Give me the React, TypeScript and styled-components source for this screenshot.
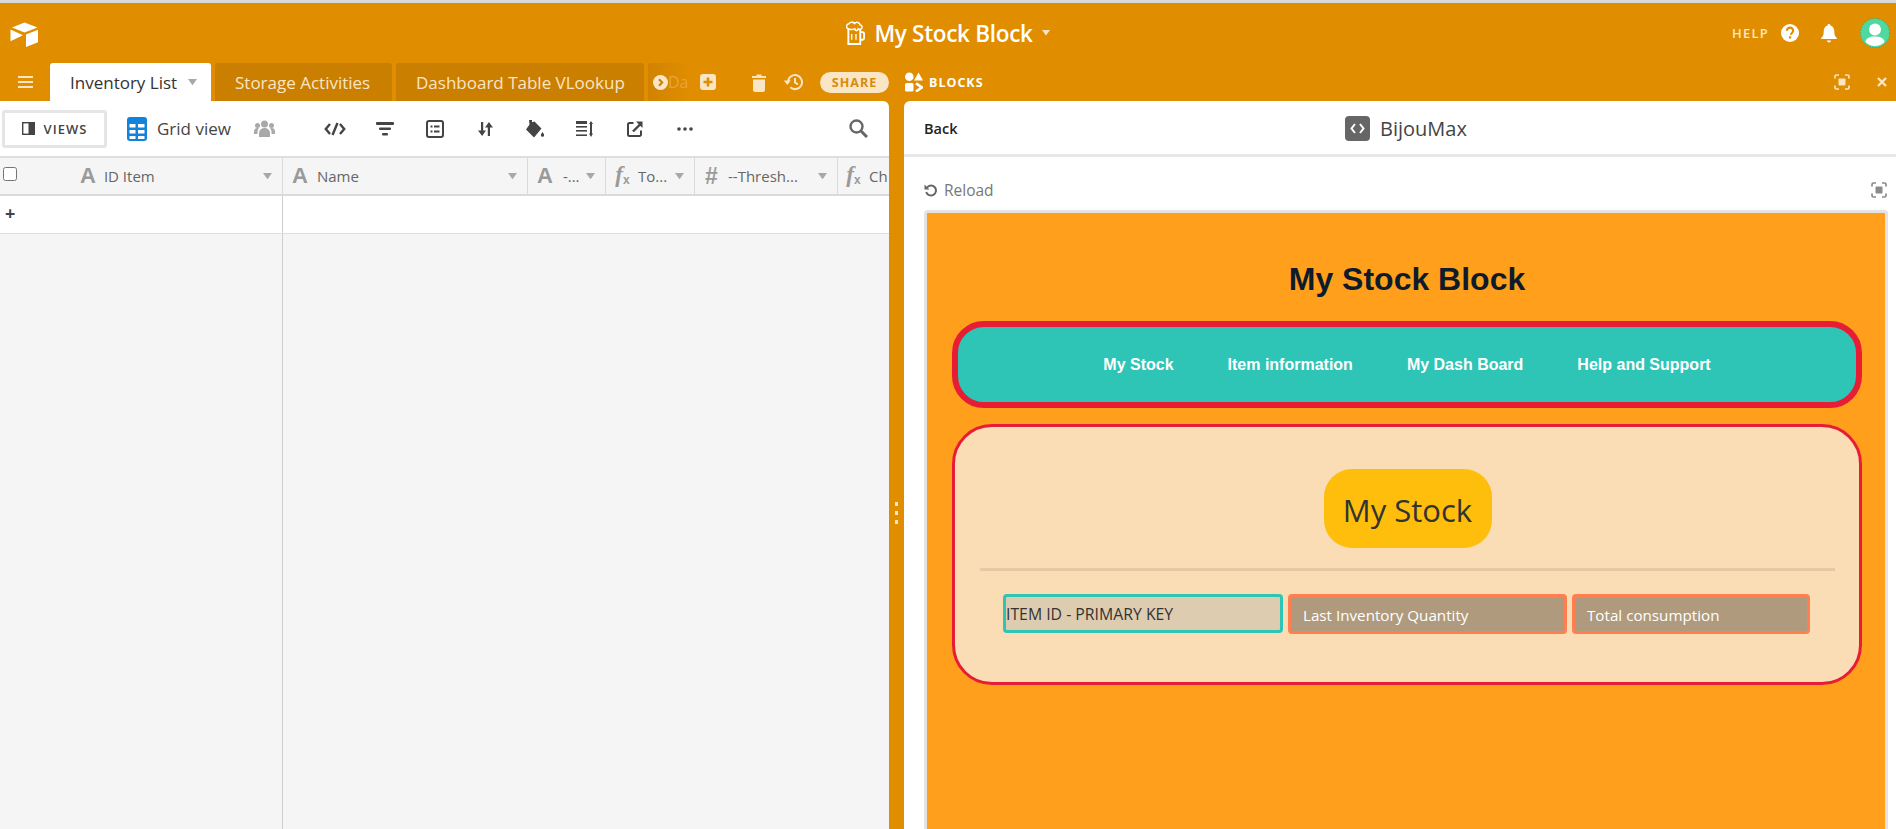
import React from "react";
import styled, { createGlobalStyle } from "styled-components";

const GlobalStyle = createGlobalStyle`
  html, body {
    margin: 0;
    padding: 0;
    height: 100%;
    overflow: hidden;
    background: #e08d00;
  }
  * {
    box-sizing: border-box;
  }
  svg {
    flex: none;
  }
`;

const SEGOE = `"Open Sans", "Noto Sans", sans-serif`;
const ARIAL = `"Liberation Sans", Arial, sans-serif`;
const SERIF = `"Liberation Serif", serif`;

const columns = [
  { width: 283, icon: "A", label: "ID Item", indent: 80, check: true, textGap: 8 },
  { width: 245, icon: "A", label: "Name", indent: 9, textGap: 9 },
  { width: 78, icon: "A", label: "-...", indent: 9, textGap: 10 },
  { width: 89, icon: "fx", label: "To...", indent: 9, textGap: 8 },
  { width: 143, icon: "#", label: "--Thresh...", indent: 9, textGap: 9 },
  { width: 60, icon: "fx", label: "Ch", indent: 8, textGap: 8 },
];

const Caret = ({ color = "#a8a8a8", size = 9 }: { color?: string; size?: number }) => (
  <svg width={size} height={size * 0.7} viewBox="0 0 10 7">
    <path d="M0 0h10L5 7z" fill={color} />
  </svg>
);

const LogoIcon = () => (
  <svg width="29" height="25" viewBox="0 0 29 25">
    <path d="M14.5 0.5 L2 5.4 L14.5 10.4 L27.5 5.4 Z" fill="#fff" />
    <path d="M16 12.6 V25 L28 20.2 V7.8 Z" fill="#fff" />
    <path d="M0.5 7.5 V19.2 L13 13.2 Z" fill="#fff" />
  </svg>
);

const BeerIcon = () => (
  <svg width="19" height="25" viewBox="0 0 20 25" fill="none" stroke="#fff" strokeWidth="2">
    <path d="M2.5 8v15.5h12.5V8" />
    <path d="M15 11h2.5a1.5 1.5 0 0 1 1.5 1.5v5a1.5 1.5 0 0 1-1.5 1.5H15" />
    <path d="M2 7.5a2.8 2.8 0 0 1 1-5.2A3.6 3.6 0 0 1 9 2a3.4 3.4 0 0 1 6 1.6 2.3 2.3 0 0 1 .5 4.4c-1.4.6-2 0-2.6-.4-.5 2.6-3.4 2.4-3.6 0-1.6.6-5.6 1-7.3-.1z" strokeWidth="1.6" />
    <path d="M6 13v6M10.500 13v6" strokeWidth="1.4" />
  </svg>
);

const QuestionIcon = () => (
  <svg width="18" height="18" viewBox="0 0 18 18">
    <circle cx="9" cy="9" r="9" fill="#fff" />
    <path d="M5.900 6.800a3.100 3.100 0 0 1 6.200 0c0 2.200-2.200 2.100-2.200 3.900" fill="none" stroke="#e08d00" strokeWidth="2.200" />
    <rect x="8" y="12.300" width="2.200" height="2.200" fill="#e08d00" />
  </svg>
);

const BellIcon = () => (
  <svg width="16" height="19" viewBox="0 0 16 19">
    <path d="M8 0a1.400 1.400 0 0 1 1.400 1.500C12 2.200 13.300 4.500 13.300 7.500c0 3.500.7 5 2.500 6.500v1H.2v-1c1.800-1.500 2.500-3 2.500-6.500 0-3 1.300-5.300 3.900-6A1.400 1.400 0 0 1 8 0z" fill="#fff" />
    <path d="M6 16.500h4a2 2 0 0 1-4 0z" fill="#fff" />
  </svg>
);

const AvatarIcon = () => (
  <svg width="30" height="30" viewBox="0 0 30 30">
    <circle cx="15" cy="15" r="14.600" fill="#4fd8a0" stroke="#1f9d7a" strokeWidth="0.600" strokeDasharray="1.500 1.500" />
    <circle cx="15" cy="11.500" r="6" fill="#fff" />
    <path d="M5.500 24c0-3.500 4-5.500 9.500-5.500s9.500 2 9.500 5.500c-2.500 2.800-5.600 4-9.500 4s-7-1.200-9.500-4z" fill="#fff" />
  </svg>
);

const FocusIcon = ({ color }: { color: string }) => (
  <svg width="16" height="16" viewBox="0 0 16 16" fill="none" stroke={color} strokeWidth="1.700">
    <path d="M1 4.500V2.500A1.500 1.500 0 0 1 2.500 1H5M11 1h2.500A1.500 1.500 0 0 1 15 2.500v2M15 11.500v2a1.500 1.500 0 0 1-1.500 1.500H11M5 15H2.500A1.500 1.500 0 0 1 1 13.500v-2" />
    <rect x="4.500" y="4.500" width="7" height="7" rx="1" fill={color} stroke="none" />
  </svg>
);

const ChevronCircle = () => (
  <svg width="15" height="15" viewBox="0 0 15 15">
    <circle cx="7.500" cy="7.500" r="7.500" fill="#fae5c5" />
    <path d="M6 4.200 9.200 7.500 6 10.800" fill="none" stroke="#c97f00" strokeWidth="2" />
  </svg>
);

const PlusBoxIcon = () => (
  <svg width="16" height="16" viewBox="0 0 16 16">
    <rect width="16" height="16" rx="3" fill="#fae5c5" />
    <path d="M8 3.500v9M3.500 8h9" stroke="#e08d00" strokeWidth="2.600" />
  </svg>
);

const TrashIcon = () => (
  <svg width="14" height="19" viewBox="0 0 14 19">
    <path d="M4.500 1.500h5V3H14v2H0V3h4.500z" fill="#fae5c5" />
    <path d="M1 6.500h12V17a2 2 0 0 1-2 2H3a2 2 0 0 1-2-2z" fill="#fae5c5" />
  </svg>
);

const HistoryIcon = () => (
  <svg width="20" height="18" viewBox="0 0 20 18" fill="none" stroke="#fae5c5" strokeWidth="2">
    <path d="M5 9a7 7 0 1 1 2.300 5.300" />
    <path d="M0.800 7.600h7L4.300 12z" fill="#fae5c5" stroke="none" />
    <path d="M12 5v4.500l3 1.800" />
  </svg>
);

const BlocksIcon = () => (
  <svg width="18" height="20" viewBox="0 0 18 20" fill="#fff">
    <circle cx="4.300" cy="4.700" r="4.300" />
    <path d="M13.500 0.500 18 8.500H9z" />
    <rect x="0" y="11" width="8.500" height="8.500" rx="1.500" />
    <path d="M11 11.300 17 15.300 11 19.500" fill="none" stroke="#fff" strokeWidth="2.600" />
  </svg>
);

const ToolbarIcons = [
  <svg key="hide" width="22" height="14" viewBox="0 0 22 14" fill="none" stroke="#444" strokeWidth="2.400">
    <path d="M6 2 1.800 7 6 12M16 2l4.200 5L16 12M13.500 1 8.500 13" />
  </svg>,
  <svg key="filter" width="18" height="14" viewBox="0 0 18 14" fill="#444">
    <rect x="0" y="0" width="18" height="3" rx="1" />
    <rect x="3" y="5.500" width="12" height="2.500" rx="1" />
    <rect x="6" y="11" width="6" height="2.500" rx="1" />
  </svg>,
  <svg key="group" width="18" height="18" viewBox="0 0 18 18">
    <rect x="1" y="1" width="16" height="16" rx="2" fill="none" stroke="#444" strokeWidth="2" />
    <path d="M4.500 5.500h2v2h-2zM8 5.500h5.500v2H8zM4.500 10.500h2v2h-2zM8 10.500h5.500v2H8z" fill="#444" />
  </svg>,
  <svg key="sort" width="15" height="14" viewBox="0 0 15 14" fill="#444">
    <path d="M3 0h2.200v8.500H8L4.100 14 0 8.500h3z" />
    <path d="M9.800 14h2.200V5.500h3L10.900 0 7 5.500h2.800z" />
  </svg>,
  <svg key="color" width="19" height="18" viewBox="0 0 19 18" fill="#444">
    <path d="M3 0h3v2.200L8.500 1.500 15.500 8.500 8 17.500 0 9.500 3.500 4.500z" />
    <path d="M16.500 12c1 1.500 1.600 2.300 1.600 3.200a1.600 1.600 0 0 1-3.200 0c0-.9.600-1.700 1.600-3.200z" />
  </svg>,
  <svg key="height" width="18" height="16" viewBox="0 0 18 16" fill="#444">
    <rect x="0" y="0" width="11" height="3" />
    <rect x="0" y="5" width="11" height="1.600" />
    <rect x="0" y="9" width="11" height="1.600" />
    <rect x="0" y="13.400" width="11" height="1.600" />
    <path d="M13 3 15 0l2 3h-1v9.500h1L15 16l-2-3.500h1V3z" />
  </svg>,
  <svg key="share" width="16" height="16" viewBox="0 0 16 16" fill="none" stroke="#444" strokeWidth="2">
    <path d="M6.500 2H2.500A1.500 1.500 0 0 0 1 3.500v10A1.500 1.500 0 0 0 2.500 15h10a1.500 1.500 0 0 0 1.500-1.500V9.500" />
    <path d="M6 10.500 14 2.500" strokeWidth="2.400" />
    <path d="M9 0.500h6.500V7z" fill="#444" stroke="none" />
  </svg>,
  <svg key="more" width="16" height="4" viewBox="0 0 16 4" fill="#444">
    <circle cx="2" cy="2" r="1.800" />
    <circle cx="8" cy="2" r="1.800" />
    <circle cx="14" cy="2" r="1.800" />
  </svg>,
];

const SearchIcon = () => (
  <svg width="19" height="19" viewBox="0 0 19 19" fill="none" stroke="#666" strokeWidth="2.400">
    <circle cx="7.500" cy="7.500" r="6" />
    <path d="M12 12l6 6" strokeWidth="3" />
  </svg>
);

const GridIcon = () => (
  <svg width="20" height="24" viewBox="0 0 20 24">
    <rect width="20" height="24" rx="3" fill="#1283da" />
    <path d="M2.500 7h6v3.500h-6zM11 7h6.500v3.500H11zM2.500 13h6v3.500h-6zM11 13h6.500v3.500H11zM2.500 19h6v3h-6zM11 19h6.500v3H11z" fill="#fff" />
  </svg>
);

const PeopleIcon = () => (
  <svg width="21" height="17" viewBox="0 0 21 17" fill="#a9a9a9">
    <circle cx="10.500" cy="4" r="3.500" />
    <circle cx="3.500" cy="5.500" r="2.500" />
    <circle cx="17.500" cy="5.500" r="2.500" />
    <path d="M5 17v-4a5.500 5 0 0 1 11 0v4z" />
    <path d="M0 14v-2.500A3.500 3.500 0 0 1 3.500 8c.5 0 .9.100 1.300.3A7 7 0 0 0 3.500 13v1zM21 14v-2.500A3.500 3.500 0 0 0 17.500 8c-.5 0-.9.100-1.300.3a7 7 0 0 1 1.300 4.700v1z" />
  </svg>
);

const ViewsIcon = () => (
  <svg width="13" height="13" viewBox="0 0 13 13">
    <rect x="0.700" y="0.700" width="11.600" height="11.600" fill="none" stroke="#444" strokeWidth="1.400" />
    <rect x="6.500" y="0.700" width="5.800" height="11.600" fill="#444" />
  </svg>
);

const Page = styled.div`
  width: 1896px;
  height: 829px;
  display: flex;
  flex-direction: column;
  overflow: hidden;
  border-top: 3px solid #d9d9d9;
  font-family: ${SEGOE};
  background: #e08d00;
`;

const TopBar = styled.header`
  height: 60px;
  display: grid;
  grid-template-columns: 1fr auto 1fr;
  align-items: center;
  padding: 0 6px 0 10px;
`;

const LogoSlot = styled.div`
  display: flex;
  align-items: center;
  padding-top: 2px;
`;

const Title = styled.div`
  display: flex;
  align-items: center;
  gap: 9px;
  padding-right: 4px;
  color: #fff;
  font-size: 22.500px;
  font-weight: 600;
  letter-spacing: -0.3px;
`;

const UserArea = styled.div`
  display: flex;
  align-items: center;
  justify-content: flex-end;
`;

const HelpLabel = styled.span`
  color: #fae5c5;
  font-size: 13px;
  font-weight: 600;
  letter-spacing: 1.200px;
  margin-right: 12px;
`;

const BellSlot = styled.span`
  display: flex;
  margin: 0 23px 0 22px;
`;

const TabRow = styled.div`
  height: 38px;
  display: flex;
`;

const LeftTabs = styled.div`
  width: 889px;
  flex: none;
  display: flex;
  align-items: stretch;
`;

const MenuButton = styled.div`
  width: 50px;
  flex: none;
  display: flex;
  flex-direction: column;
  justify-content: center;
  gap: 3px;
  padding-left: 18px;
  span {
    display: block;
    width: 15px;
    height: 2px;
    background: #fae5c5;
  }
`;

const Tab = styled.div<{ $active?: boolean; $width: number }>`
  width: ${(p) => p.$width}px;
  flex: none;
  display: flex;
  align-items: center;
  padding-left: 20px;
  margin-right: 4px;
  font-size: 17px;
  font-weight: ${(p) => (p.$active ? 500 : 400)};
  white-space: nowrap;
  border-radius: 3px 3px 0 0;
  background: ${(p) => (p.$active ? "#fff" : "#ca7f00")};
  color: ${(p) => (p.$active ? "#333" : "#fae5c5")};
  gap: 11px;
`;

const FadeTab = styled.div`
  width: 42px;
  flex: none;
  display: flex;
  align-items: center;
  padding-left: 5px;
  margin-right: 10px;
  border-radius: 3px 3px 0 0;
  background: linear-gradient(90deg, #d18300, #e08d00);
  font-size: 16px;
  color: #e8a43a;
`;

const TabAction = styled.div<{ $after: number }>`
  display: flex;
  flex: none;
  align-items: center;
  margin-right: ${(p) => p.$after}px;
`;

const SharePill = styled.div`
  width: 69px;
  height: 21px;
  flex: none;
  margin-top: 9px;
  display: flex;
  align-items: center;
  justify-content: center;
  border-radius: 11px;
  background: #fae5c5;
  color: #d98a0a;
  font-size: 12.500px;
  font-weight: 700;
  letter-spacing: 1px;
`;

const RightTabs = styled.div`
  flex: 1;
  display: flex;
  align-items: center;
  padding: 0 9px 0 16px;
`;

const BlocksLabel = styled.span`
  flex: 1;
  margin-left: 6px;
  color: #fff;
  font-size: 12.500px;
  font-weight: 700;
  letter-spacing: 1px;
`;

const CloseSlot = styled.span`
  display: flex;
  margin-left: 27px;
  color: #fae5c5;
`;

const Body = styled.main`
  flex: 1;
  display: flex;
  min-height: 0;
`;

const GridPanel = styled.section`
  width: 889px;
  flex: none;
  background: #fff;
  border-radius: 0 6px 0 0;
  display: flex;
  flex-direction: column;
  overflow: hidden;
`;

const Gutter = styled.div`
  width: 15px;
  flex: none;
  display: flex;
  flex-direction: column;
  align-items: center;
  gap: 5px;
  padding-top: 401px;
  span {
    width: 3px;
    height: 4px;
    background: #fae5c5;
  }
`;

const ViewBar = styled.div`
  height: 57px;
  flex: none;
  display: flex;
  align-items: center;
  padding-left: 2px;
  border-bottom: 2px solid #dedede;
`;

const ViewsButton = styled.div`
  width: 105px;
  height: 38px;
  flex: none;
  display: flex;
  align-items: center;
  justify-content: center;
  gap: 9px;
  border: 3px solid #e5e5e5;
  border-radius: 3px;
  color: #444;
  font-size: 13px;
  font-weight: 600;
  letter-spacing: 1px;
`;

const ViewName = styled.div`
  width: 127px;
  flex: none;
  display: flex;
  align-items: center;
  gap: 10px;
  margin-left: 20px;
  font-size: 17px;
  color: #444;
  white-space: nowrap;
`;

const PeopleSlot = styled.span`
  display: flex;
  flex: none;
  margin-right: 35px;
`;

const ToolSlot = styled.span`
  width: 50px;
  flex: none;
  display: flex;
  align-items: center;
  justify-content: center;
`;

const SearchSlot = styled.span`
  display: flex;
  flex: none;
  margin-left: 139px;
`;

const HeaderRow = styled.div`
  height: 38px;
  flex: none;
  display: flex;
  background: #f5f5f5;
  border-bottom: 2px solid #dadada;
`;

const HeaderCell = styled.div<{ $width: number; $indent: number }>`
  width: ${(p) => p.$width}px;
  flex: none;
  display: flex;
  align-items: center;
  padding: 0 10px 0 ${(p) => p.$indent}px;
  border-right: 1px solid #dadada;
  color: #666;
  font-size: 15px;
  position: relative;
  white-space: nowrap;
`;

const CellCheck = styled.input`
  position: absolute;
  left: 3px;
  top: 9px;
  width: 14px;
  height: 14px;
  margin: 0;
`;

const FieldIcon = styled.span<{ $gap: number; $kind: string }>`
  min-width: 15px;
  display: flex;
  align-items: baseline;
  justify-content: center;
  margin-right: ${(p) => p.$gap}px;
  color: #9a9a9a;
  line-height: 20px;
  font-size: ${(p) => (p.$kind === "A" ? 22 : 23)}px;
  font-weight: 700;
  font-family: ${(p) => (p.$kind === "fx" ? SERIF : ARIAL)};
  font-style: ${(p) => (p.$kind === "fx" ? "italic" : "normal")};
  small {
    font-size: 12px;
    font-style: normal;
    font-family: ${ARIAL};
    transform: translateY(2px);
  }
`;

const FieldLabel = styled.span`
  flex: 1;
  overflow: hidden;
`;

const AddRow = styled.div`
  height: 38px;
  flex: none;
  display: flex;
  align-items: center;
  border-bottom: 1px solid #dedede;
  font-size: 18px;
  font-weight: 700;
  color: #444;
`;

const AddCell = styled.div`
  width: 283px;
  height: 100%;
  padding-left: 5px;
  border-right: 1px solid #cfcfcf;
  line-height: 34px;
`;

const EmptyArea = styled.div`
  flex: 1;
  background: #f5f5f5;
`;

const EmptyFrozen = styled.div`
  width: 283px;
  height: 100%;
  border-right: 1px solid #cfcfcf;
`;

const BlockPanel = styled.section`
  flex: 1;
  background: #fff;
  border-radius: 6px 0 0 0;
  display: flex;
  flex-direction: column;
  min-width: 0;
`;

const BlockHeader = styled.div`
  height: 56px;
  flex: none;
  display: grid;
  grid-template-columns: 1fr auto 1fr;
  align-items: center;
  padding: 2px 20px 0;
  border-bottom: 3px solid #e8e8e8;
`;

const BackLink = styled.span`
  color: #222;
  font-size: 14.500px;
  font-weight: 600;
`;

const BlockName = styled.div`
  display: flex;
  align-items: center;
  gap: 10px;
  margin-left: 12px;
  color: #444;
  font-size: 20px;
`;

const CodeBadge = styled.span`
  width: 25px;
  height: 25px;
  display: flex;
  align-items: center;
  justify-content: center;
  border-radius: 4px;
  background: #666;
`;

const BlockBody = styled.div`
  flex: 1;
  min-height: 0;
  display: flex;
  flex-direction: column;
  padding: 0 8px 0 20px;
`;

const ReloadRow = styled.div`
  height: 53px;
  flex: none;
  display: flex;
  align-items: center;
  gap: 7px;
  padding: 12px 1px 0 0;
  color: #777;
  font-size: 15.500px;
`;

const ReloadLabel = styled.span`
  flex: 1;
`;

const BlockFrame = styled.div`
  flex: 1;
  min-height: 0;
  border: 3px solid #e3e3e3;
  border-bottom: none;
  border-radius: 4px 4px 0 0;
  background: #ff9f1c;
  padding: 0 23px 0 25px;
  display: flex;
  flex-direction: column;
`;

const AppHeading = styled.h1`
  margin: 0;
  padding-top: 46px;
  height: 108px;
  text-align: center;
  font-family: ${ARIAL};
  font-size: 32px;
  line-height: 40px;
  font-weight: 700;
  color: #0d1b2a;
`;

const NavBar = styled.nav`
  height: 87px;
  flex: none;
  display: flex;
  align-items: center;
  justify-content: center;
  gap: 54px;
  border: 6px solid #e71d36;
  border-radius: 32px;
  background: #2ec4b6;
`;

const NavItem = styled.a`
  color: #fff;
  font-family: ${ARIAL};
  font-size: 16px;
  font-weight: 700;
`;

const StockCard = styled.div`
  height: 261px;
  flex: none;
  margin-top: 16px;
  padding: 42px 24px 0 25px;
  border: 3px solid #e71d36;
  border-radius: 40px;
  background: #fadcb5;
  display: flex;
  flex-direction: column;
  align-items: stretch;
`;

const StockPill = styled.div`
  width: 168px;
  height: 79px;
  flex: none;
  align-self: center;
  display: flex;
  align-items: center;
  justify-content: center;
  padding-top: 3px;
  border-radius: 28px;
  background: #ffbe0b;
  color: #333;
  font-size: 31px;
`;

const Divider = styled.hr`
  width: 100%;
  height: 3px;
  margin: 20px 0 23px;
  border: none;
  background: #e4c9a2;
`;

const FieldRow = styled.div`
  display: flex;
  gap: 5px;
  padding-left: 23px;
`;

const FieldBox = styled.div<{ $width: number; $primary?: boolean }>`
  width: ${(p) => p.$width}px;
  height: ${(p) => (p.$primary ? 39 : 40)}px;
  flex: none;
  display: flex;
  align-items: center;
  padding: ${(p) => (p.$primary ? "0" : "1px 0 0 12px")};
  border: 3px solid ${(p) => (p.$primary ? "#2ec4b6" : "#ff7f51")};
  border-radius: 4px;
  background: ${(p) => (p.$primary ? "#deccb0" : "#af9a7d")};
  color: ${(p) => (p.$primary ? "#333" : "#fff")};
  font-size: ${(p) => (p.$primary ? 15.8 : 15.2)}px;
  white-space: nowrap;
`;

export default function App() {
  return (
    <Page>
      <GlobalStyle />
      <TopBar>
        <LogoSlot>
          <LogoIcon />
        </LogoSlot>
        <Title>
          <BeerIcon />
          <span>My Stock Block</span>
          <Caret color="#fae5c5" size={8} />
        </Title>
        <UserArea>
          <HelpLabel>HELP</HelpLabel>
          <QuestionIcon />
          <BellSlot>
            <BellIcon />
          </BellSlot>
          <AvatarIcon />
        </UserArea>
      </TopBar>

      <TabRow>
        <LeftTabs>
          <MenuButton>
            <span />
            <span />
            <span />
          </MenuButton>
          <Tab $active $width={161}>
            Inventory List <Caret />
          </Tab>
          <Tab $width={177}>Storage Activities</Tab>
          <Tab $width={248}>Dashboard Table VLookup</Tab>
          <FadeTab>
            <ChevronCircle />
            <span>Da</span>
          </FadeTab>
          <TabAction $after={36}>
            <PlusBoxIcon />
          </TabAction>
          <TabAction $after={17}>
            <TrashIcon />
          </TabAction>
          <TabAction $after={17}>
            <HistoryIcon />
          </TabAction>
          <SharePill>SHARE</SharePill>
        </LeftTabs>
        <RightTabs>
          <BlocksIcon />
          <BlocksLabel>BLOCKS</BlocksLabel>
          <FocusIcon color="#fae5c5" />
          <CloseSlot>
            <svg width="10" height="10" viewBox="0 0 10 10" stroke="#fae5c5" strokeWidth="2.400">
              <path d="M1 1l8 8M9 1l-8 8" />
            </svg>
          </CloseSlot>
        </RightTabs>
      </TabRow>

      <Body>
        <GridPanel>
          <ViewBar>
            <ViewsButton>
              <ViewsIcon />
              VIEWS
            </ViewsButton>
            <ViewName>
              <GridIcon />
              <span>Grid view</span>
            </ViewName>
            <PeopleSlot>
              <PeopleIcon />
            </PeopleSlot>
            {ToolbarIcons.map((icon) => (
              <ToolSlot key={icon.key}>{icon}</ToolSlot>
            ))}
            <SearchSlot>
              <SearchIcon />
            </SearchSlot>
          </ViewBar>
          <HeaderRow>
            {columns.map((col) => (
              <HeaderCell key={col.label} $width={col.width} $indent={col.indent}>
                {col.check && <CellCheck type="checkbox" readOnly />}
                <FieldIcon $gap={col.textGap} $kind={col.icon}>
                  {col.icon === "fx" ? (
                    <>
                      f<small>x</small>
                    </>
                  ) : (
                    col.icon
                  )}
                </FieldIcon>
                <FieldLabel>{col.label}</FieldLabel>
                {col.label !== "Ch" && <Caret />}
              </HeaderCell>
            ))}
          </HeaderRow>
          <AddRow>
            <AddCell>+</AddCell>
          </AddRow>
          <EmptyArea>
            <EmptyFrozen />
          </EmptyArea>
        </GridPanel>

        <Gutter>
          <span />
          <span />
          <span />
        </Gutter>

        <BlockPanel>
          <BlockHeader>
            <BackLink>Back</BackLink>
            <BlockName>
              <CodeBadge>
                <svg width="15" height="11" viewBox="0 0 15 11" fill="none" stroke="#fff" strokeWidth="2">
                  <path d="M5 1 1.500 5.500 5 10M10 1l3.500 4.500L10 10" />
                </svg>
              </CodeBadge>
              BijouMax
            </BlockName>
          </BlockHeader>
          <BlockBody>
            <ReloadRow>
              <svg width="13" height="14" viewBox="0 0 13 14" fill="none" stroke="#666" strokeWidth="2">
                <path d="M3 4.500a5 5 0 1 1-.8 4.500" />
                <path d="M0.500 1.500v5h5z" fill="#666" stroke="none" />
              </svg>
              <ReloadLabel>Reload</ReloadLabel>
              <FocusIcon color="#8a8a8a" />
            </ReloadRow>
            <BlockFrame>
              <AppHeading>My Stock Block</AppHeading>
              <NavBar>
                <NavItem>My Stock</NavItem>
                <NavItem>Item information</NavItem>
                <NavItem>My Dash Board</NavItem>
                <NavItem>Help and Support</NavItem>
              </NavBar>
              <StockCard>
                <StockPill>My Stock</StockPill>
                <Divider />
                <FieldRow>
                  <FieldBox $width={280} $primary>
                    ITEM ID - PRIMARY KEY
                  </FieldBox>
                  <FieldBox $width={279}>Last Inventory Quantity</FieldBox>
                  <FieldBox $width={238}>Total consumption</FieldBox>
                </FieldRow>
              </StockCard>
            </BlockFrame>
          </BlockBody>
        </BlockPanel>
      </Body>
    </Page>
  );
}
